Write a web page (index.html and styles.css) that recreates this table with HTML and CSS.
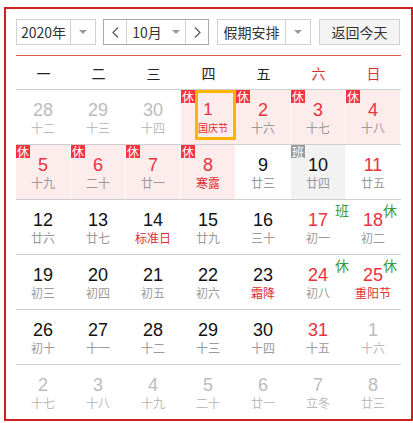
FILE: index.html
```html
<!DOCTYPE html>
<html lang="zh">
<head>
<meta charset="utf-8">
<title>万年历</title>
<link rel="stylesheet" href="styles.css">
</head>
<body>
<div class="cal">
  <div class="bar">
    <div class="sel sel-year"><span class="sel-text">2020年</span><span class="sel-arrow"><i class="tri"></i></span></div>
    <div class="month">
      <span class="mbtn"><svg width="7" height="11" viewBox="0 0 7 11"><path d="M6 0.5 L1 5.5 L6 10.5" fill="none" stroke="#555" stroke-width="1.2"/></svg></span>
      <span class="mtext">10月<i class="tri"></i></span>
      <span class="mbtn"><svg width="7" height="11" viewBox="0 0 7 11"><path d="M1 0.5 L6 5.5 L1 10.5" fill="none" stroke="#555" stroke-width="1.2"/></svg></span>
    </div>
    <div class="sel sel-hol"><span class="sel-text">假期安排</span><span class="sel-arrow"><i class="tri"></i></span></div>
    <div class="btn">返回今天</div>
  </div>
  <div class="week-head">
    <span>一</span><span>二</span><span>三</span><span>四</span><span>五</span><span class="we">六</span><span class="we">日</span>
  </div>
  <div class="grid">
    <div class="row">
      <div class="cell other"><div class="num">28</div><div class="lun">十二</div></div>
      <div class="cell other"><div class="num">29</div><div class="lun">十三</div></div>
      <div class="cell other"><div class="num">30</div><div class="lun">十四</div></div>
      <div class="cell hol today"><span class="badge">休</span><div class="num">1</div><div class="lun fest">国庆节</div></div>
      <div class="cell hol"><span class="badge">休</span><div class="num">2</div><div class="lun">十六</div></div>
      <div class="cell hol"><span class="badge">休</span><div class="num">3</div><div class="lun">十七</div></div>
      <div class="cell hol"><span class="badge">休</span><div class="num">4</div><div class="lun">十八</div></div>
    </div>
    <div class="row">
      <div class="cell hol"><span class="badge">休</span><div class="num">5</div><div class="lun">十九</div></div>
      <div class="cell hol"><span class="badge">休</span><div class="num">6</div><div class="lun">二十</div></div>
      <div class="cell hol"><span class="badge">休</span><div class="num">7</div><div class="lun">廿一</div></div>
      <div class="cell hol"><span class="badge">休</span><div class="num">8</div><div class="lun fest">寒露</div></div>
      <div class="cell"><div class="num">9</div><div class="lun">廿三</div></div>
      <div class="cell work"><span class="badge badge-work">班</span><div class="num">10</div><div class="lun">廿四</div></div>
      <div class="cell red"><div class="num">11</div><div class="lun">廿五</div></div>
    </div>
    <div class="row">
      <div class="cell"><div class="num">12</div><div class="lun">廿六</div></div>
      <div class="cell"><div class="num">13</div><div class="lun">廿七</div></div>
      <div class="cell"><div class="num">14</div><div class="lun fest">标准日</div></div>
      <div class="cell"><div class="num">15</div><div class="lun">廿九</div></div>
      <div class="cell"><div class="num">16</div><div class="lun">三十</div></div>
      <div class="cell red"><span class="mark mark-sat">班</span><div class="num">17</div><div class="lun">初一</div></div>
      <div class="cell red"><span class="mark mark-sun">休</span><div class="num">18</div><div class="lun">初二</div></div>
    </div>
    <div class="row">
      <div class="cell"><div class="num">19</div><div class="lun">初三</div></div>
      <div class="cell"><div class="num">20</div><div class="lun">初四</div></div>
      <div class="cell"><div class="num">21</div><div class="lun">初五</div></div>
      <div class="cell"><div class="num">22</div><div class="lun">初六</div></div>
      <div class="cell"><div class="num">23</div><div class="lun fest">霜降</div></div>
      <div class="cell red"><span class="mark mark-sat">休</span><div class="num">24</div><div class="lun">初八</div></div>
      <div class="cell red"><span class="mark mark-sun">休</span><div class="num">25</div><div class="lun fest">重阳节</div></div>
    </div>
    <div class="row">
      <div class="cell"><div class="num">26</div><div class="lun">初十</div></div>
      <div class="cell"><div class="num">27</div><div class="lun">十一</div></div>
      <div class="cell"><div class="num">28</div><div class="lun">十二</div></div>
      <div class="cell"><div class="num">29</div><div class="lun">十三</div></div>
      <div class="cell"><div class="num">30</div><div class="lun">十四</div></div>
      <div class="cell red"><div class="num">31</div><div class="lun">十五</div></div>
      <div class="cell other"><div class="num">1</div><div class="lun">十六</div></div>
    </div>
    <div class="row last">
      <div class="cell other"><div class="num">2</div><div class="lun">十七</div></div>
      <div class="cell other"><div class="num">3</div><div class="lun">十八</div></div>
      <div class="cell other"><div class="num">4</div><div class="lun">十九</div></div>
      <div class="cell other"><div class="num">5</div><div class="lun">二十</div></div>
      <div class="cell other"><div class="num">6</div><div class="lun">廿一</div></div>
      <div class="cell other"><div class="num">7</div><div class="lun">立冬</div></div>
      <div class="cell other"><div class="num">8</div><div class="lun">廿三</div></div>
    </div>
  </div>
</div>
</body>
</html>
```

FILE: styles.css
```css
html, body {
  margin: 0;
  padding: 0;
  background: #fff;
}
body {
  font-family: "Liberation Sans", "Noto Sans CJK SC", sans-serif;
  color: #333;
}
.cal {
  box-sizing: border-box;
  width: 409px;
  margin: 7px 0 0 4px;
  border: 2px solid #cd2020;
  padding: 10px 10px 0 10px;
}
.bar {
  display: flex;
  height: 26px;
  margin-bottom: 10px;
}
.sel, .month, .btn {
  box-sizing: border-box;
  height: 26px;
  display: flex;
  align-items: stretch;
  font-size: 14px;
  font-family: "Noto Sans CJK SC", "Liberation Sans", sans-serif;
  color: #333;
}
.sel {
  border: 1px solid #d2d2d2;
  background: #fff;
}
.sel-year { width: 80px; }
.sel-hol { width: 94px; margin-left: 8px; }
.sel-text {
  flex: 1;
  display: flex;
  align-items: center;
  justify-content: center;
}
.sel-arrow {
  width: 24px;
  border-left: 1px solid #d2d2d2;
  display: flex;
  align-items: center;
  justify-content: center;
}
.tri {
  display: inline-block;
  width: 0;
  height: 0;
  border-left: 4px solid transparent;
  border-right: 4px solid transparent;
  border-top: 4px solid #999;
}
.month {
  width: 106px;
  margin-left: 7px;
  border: 1px solid #a8a8a8;
}
.mbtn {
  width: 22px;
  display: flex;
  align-items: center;
  justify-content: center;
}
.mbtn:first-child { border-right: 1px solid #d2d2d2; }
.mbtn:last-child { border-left: 1px solid #d2d2d2; }
.mtext {
  flex: 1;
  display: flex;
  align-items: center;
  justify-content: center;
  gap: 10px;
}
.btn {
  width: 81px;
  margin-left: 8px;
  border: 1px solid #d2d2d2;
  background: #f4f4f4;
  align-items: center;
  justify-content: center;
}
.week-head {
  display: flex;
  border-top: 1px solid #e2574c;
  border-bottom: 1px solid #cfcfcf;
  height: 33px;
  align-items: center;
  font-family: "Noto Sans CJK SC", sans-serif;
  font-size: 14px;
  color: #222;
}
.week-head span {
  width: 55px;
  text-align: center;
}
.week-head .we { color: #e02d33; }
.row {
  display: flex;
  height: 54px;
  border-bottom: 1px solid #cfcfcf;
}
.row.last { border-bottom: none; }
.cell {
  position: relative;
  box-sizing: border-box;
  width: 55px;
  height: 54px;
  border-right: 1px solid #fff;
  text-align: center;
  padding-top: 10px;
}
.num {
  font-family: "Liberation Sans", sans-serif;
  font-size: 18px;
  line-height: 20px;
  color: #111;
}
.lun {
  font-family: "Noto Sans CJK SC", sans-serif;
  font-size: 12px;
  line-height: 14px;
  margin-top: 1px;
  color: #9a9a9a;
  white-space: nowrap;
}
.lun.fest { color: #e02d33; }
.cell.hol { background: #fdecec; }
.cell.hol .num, .cell.red .num { color: #e8323c; }
.cell.work { background: #f2f2f2; }
.cell.other .num, .cell.other .lun { color: #bcbcbc; }
.cell.today .num { font-size: 17px; }
.cell.today .lun {
  font-size: 10px;
  padding-left: 10px;
}
.badge {
  position: absolute;
  left: 0;
  top: 0;
  width: 14px;
  height: 13px;
  background: #f5333f;
  color: #fff;
  font-family: "Noto Sans CJK SC", sans-serif;
  font-size: 12px;
  line-height: 13px;
  text-align: center;
}
.badge-work { background: #9c9c9c; }
.cell.today::after {
  content: "";
  position: absolute;
  left: 14px;
  top: 0;
  width: 41px;
  height: 50px;
  box-sizing: border-box;
  border: 3px solid #ffb400;
}
.mark {
  position: absolute;
  top: 2px;
  font-family: "Noto Sans CJK SC", sans-serif;
  font-size: 14px;
  line-height: 16px;
  color: #3a9a3a;
  z-index: 1;
}
.mark-sat { left: 44px; }
.mark-sun { left: 37px; }
```
